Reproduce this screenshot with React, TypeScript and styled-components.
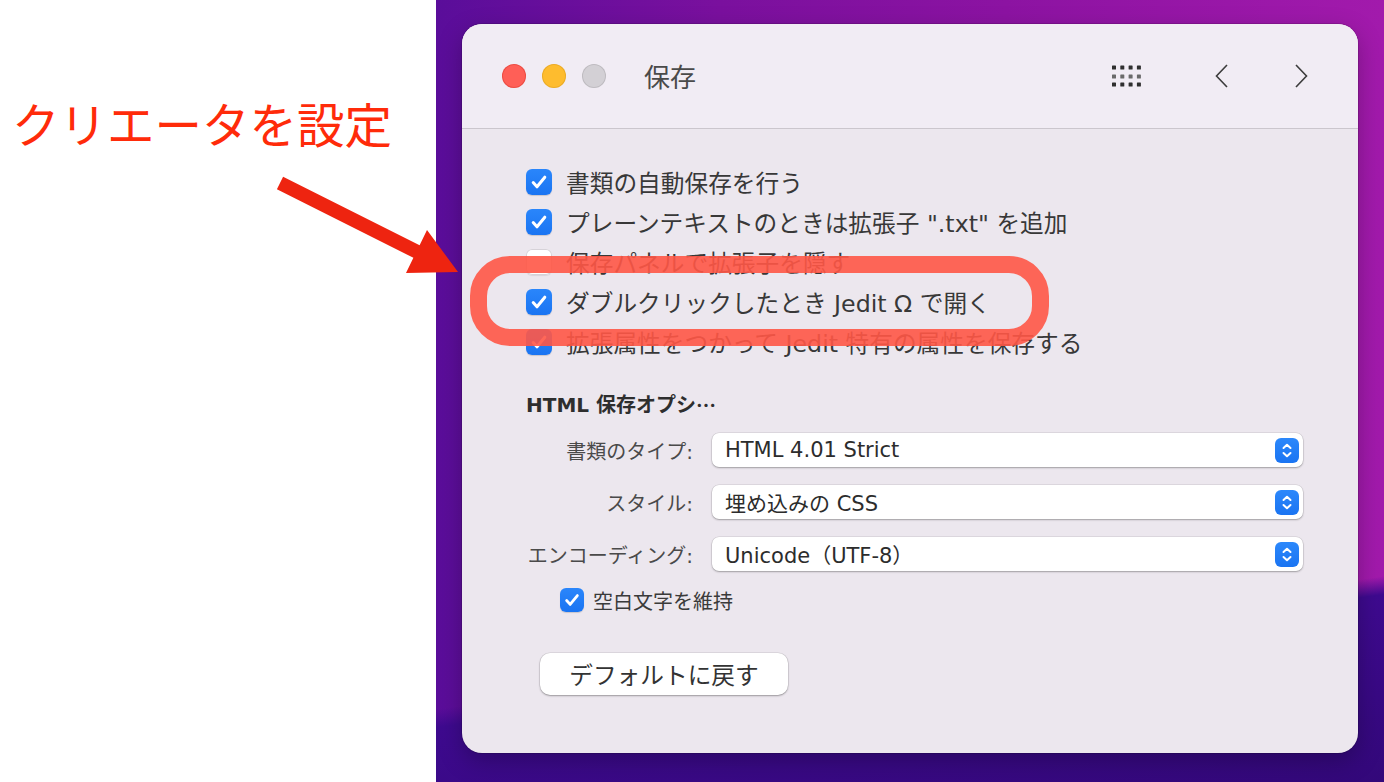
import React from "react";
import styled, { createGlobalStyle } from "styled-components";

const GlobalStyle = createGlobalStyle`
  html, body { margin: 0; padding: 0; background: #ffffff; }
  body { font-family: "DejaVu Sans", "Noto Sans CJK JP", sans-serif; }
  * { box-sizing: border-box; }
`;

const Page = styled.div`
  position: relative;
  width: 1384px;
  height: 782px;
  display: flex;
  overflow: hidden;
`;

const Annotation = styled.aside`
  width: 436px;
  flex: none;
  background: #ffffff;
  padding: 99px 0 0 12px;
`;

const Caption = styled.div`
  font-family: "Noto Sans CJK JP", sans-serif;
  font-size: 47.5px;
  line-height: 1;
  color: #ff2b0a;
  font-weight: 400;
  white-space: nowrap;
`;

const ArrowOverlay = styled.svg`
  position: absolute;
  left: 0;
  top: 0;
  pointer-events: none;
  z-index: 3;
`;

const Desktop = styled.main`
  flex: 1;
  display: flex;
  padding: 24px 26px 29px 26px;
  background:
    linear-gradient(172deg, rgba(50, 8, 120, 0) 0%, rgba(50, 8, 120, 0) 77.5%, #3e0a8f 79.5%, #33087a 100%),
    linear-gradient(90deg, #5a0d9a 0%, #7a109e 30%, #8c13a2 60%, #a21aac 100%);
`;

const Window = styled.section`
  flex: 1;
  display: flex;
  flex-direction: column;
  background: #ece7ee;
  border-radius: 20px;
  box-shadow: 0 0 0 1px rgba(0, 0, 0, 0.12), 0 8px 24px rgba(0, 0, 0, 0.25);
`;

const TitleBar = styled.header`
  flex: none;
  height: 105px;
  display: flex;
  align-items: center;
  padding: 0 49px 0 40px;
  background: #f1ecf4;
  border-bottom: 1px solid #cbc6cd;
  border-radius: 20px 20px 0 0;
`;

const Lights = styled.div`
  display: flex;
  gap: 16px;
`;

const Light = styled.span<{ $c: string; $b: string }>`
  width: 24px;
  height: 24px;
  border-radius: 50%;
  background: ${(p) => p.$c};
  box-shadow: inset 0 0 0 1px ${(p) => p.$b};
`;

const Title = styled.h1`
  margin: 0 0 0 38px;
  font-family: "Noto Sans CJK JP", sans-serif;
  font-size: 26px;
  font-weight: 400;
  color: #4a4a4a;
  line-height: 1;
`;

const Spacer = styled.div`
  flex: 1;
`;

const ToolIcon = styled.svg<{ $ml: number }>`
  margin-left: ${(p) => p.$ml}px;
  display: block;
`;

const Body = styled.div`
  flex: 1;
  display: flex;
  flex-direction: column;
  padding: 33px 55px 0 64px;
`;

const CheckList = styled.div`
  display: flex;
  flex-direction: column;
`;

const Row = styled.div`
  position: relative;
  height: 40px;
  display: flex;
  align-items: center;
  gap: 14px;
  font-size: 23.7px;
  color: #383838;
  white-space: nowrap;
`;

const Box = styled.span<{ $on: boolean; $size: number }>`
  flex: none;
  width: ${(p) => p.$size}px;
  height: ${(p) => p.$size}px;
  border-radius: 6px;
  display: flex;
  align-items: center;
  justify-content: center;
  background: ${(p) => (p.$on ? "linear-gradient(#2a86fb, #1a74f2)" : "#ffffff")};
  box-shadow: ${(p) =>
    p.$on
      ? "0 1px 1px rgba(0,0,0,0.15)"
      : "inset 0 0 0 1px #d6d2d8, 0 1px 1px rgba(0,0,0,0.08)"};
`;

const Highlight = styled.div`
  position: absolute;
  left: -56px;
  top: -26px;
  width: 579px;
  height: 90px;
  border: 17px solid rgba(255, 86, 70, 0.9);
  border-radius: 40px;
  z-index: 2;
  pointer-events: none;
`;

const SectionTitle = styled.h2`
  margin: 31px 0 0 0;
  height: 24px;
  display: flex;
  align-items: center;
  font-size: 20px;
  line-height: 24px;
  font-weight: 700;
  color: #2e2e2e;
  white-space: nowrap;
`;

const Ellipsis = styled.span`
  font-family: "Noto Sans CJK JP", sans-serif;
`;

const Form = styled.div`
  margin-top: 16px;
  display: grid;
  grid-template-columns: 167px 1fr;
  grid-auto-rows: 34px;
  column-gap: 19px;
  row-gap: 18px;
  align-items: center;
`;

const Label = styled.label`
  text-align: right;
  font-size: 20px;
  color: #4a4a4a;
  white-space: nowrap;
`;

const Popup = styled.div`
  height: 34px;
  display: flex;
  align-items: center;
  justify-content: space-between;
  padding: 0 4px 0 13px;
  background: #ffffff;
  border-radius: 7px;
  box-shadow: 0 0 0 0.5px rgba(0, 0, 0, 0.12), 0 1px 2px rgba(0, 0, 0, 0.28);
  font-size: 21px;
  color: #2c2c2c;
  white-space: nowrap;
`;

const Stepper = styled.span`
  width: 24px;
  height: 25px;
  border-radius: 6px;
  background: linear-gradient(#2c88fb, #1a74f2);
  display: flex;
  align-items: center;
  justify-content: center;
`;

const SubRow = styled.div`
  margin: 17px 0 0 34px;
  height: 24px;
  display: flex;
  align-items: center;
  gap: 9px;
  font-size: 20px;
  color: #3a3a3a;
`;

const ResetButton = styled.button`
  margin: 41px 0 0 14px;
  width: 248px;
  height: 42px;
  border: none;
  border-radius: 10px;
  background: #ffffff;
  box-shadow: 0 0 0 0.5px rgba(0, 0, 0, 0.12), 0 1px 2px rgba(0, 0, 0, 0.3);
  font-family: inherit;
  font-size: 23.7px;
  color: #333333;
  padding: 0;
`;

const Check = ({ size }: { size: number }) => (
  <svg width={size} height={size} viewBox="0 0 26 26">
    <path d="M7.2 13.6 L11 17.8 L18.8 8.2" fill="none" stroke="#fff" strokeWidth="3" strokeLinecap="round" strokeLinejoin="round" />
  </svg>
);

const CheckBox = ({ on, size = 26 }: { on: boolean; size?: number }) => (
  <Box $on={on} $size={size}>{on && <Check size={size} />}</Box>
);

const PopupButton = ({ value }: { value: string }) => (
  <Popup>
    <span>{value}</span>
    <Stepper>
      <svg width="24" height="25" viewBox="0 0 24 25">
        <path d="M8.5 10 L12 6.8 L15.5 10 M8.5 15 L12 18.2 L15.5 15" fill="none" stroke="#fff" strokeWidth="2" strokeLinecap="round" strokeLinejoin="round" />
      </svg>
    </Stepper>
  </Popup>
);

const rows = [
  { on: true, text: "書類の自動保存を行う" },
  { on: true, text: "プレーンテキストのときは拡張子 \".txt\" を追加" },
  { on: false, text: "保存パネルで拡張子を隠す" },
  { on: true, text: "ダブルクリックしたとき Jedit Ω で開く", mark: true },
  { on: true, text: "拡張属性をつかって Jedit 特有の属性を保存する" },
];

const GridDots = () => {
  const xs = [2, 10.3, 18.6, 26.9];
  const ys = [2.5, 11.5, 19.5];
  return (
    <ToolIcon $ml={0} width="30" height="22" viewBox="0 0 30 22">
      {ys.map((y, r) =>
        xs.map((x, c) => (
          <rect key={`${r}-${c}`} x={x - 2} y={y - 2} width="4" height="4" rx="0.6" fill={r === 1 ? "#6a6a6a" : "#2f2f2f"} />
        ))
      )}
    </ToolIcon>
  );
};

export default function App() {
  return (
    <>
      <GlobalStyle />
      <Page>
        <Annotation>
          <Caption>クリエータを設定</Caption>
        </Annotation>
        <Desktop>
          <Window>
            <TitleBar>
              <Lights>
                <Light $c="#ff5f57" $b="rgba(200,40,30,0.35)" />
                <Light $c="#febc2e" $b="rgba(200,140,20,0.35)" />
                <Light $c="#d3d0d5" $b="rgba(0,0,0,0.1)" />
              </Lights>
              <Title>保存</Title>
              <Spacer />
              <GridDots />
              <ToolIcon $ml={73} width="13" height="24" viewBox="0 0 13 24">
                <path d="M12 1 L1.5 12 L12 23" fill="none" stroke="#3c3c3c" strokeWidth="1.6" />
              </ToolIcon>
              <ToolIcon $ml={67} width="14" height="24" viewBox="0 0 14 24">
                <path d="M1 1 L11.5 12 L1 23" fill="none" stroke="#3c3c3c" strokeWidth="1.6" />
              </ToolIcon>
            </TitleBar>
            <Body>
              <CheckList>
                {rows.map((r, i) => (
                  <Row key={i}>
                    <CheckBox on={r.on} />
                    <span>{r.text}</span>
                    {r.mark && <Highlight />}
                  </Row>
                ))}
              </CheckList>
              <SectionTitle>
                HTML 保存オプシ<Ellipsis>…</Ellipsis>
              </SectionTitle>
              <Form>
                <Label>書類のタイプ:</Label>
                <PopupButton value="HTML 4.01 Strict" />
                <Label>スタイル:</Label>
                <PopupButton value="埋め込みの CSS" />
                <Label>エンコーディング:</Label>
                <PopupButton value="Unicode（UTF-8）" />
              </Form>
              <SubRow>
                <CheckBox on size={24} />
                <span>空白文字を維持</span>
              </SubRow>
              <div>
                <ResetButton>デフォルトに戻す</ResetButton>
              </div>
            </Body>
          </Window>
        </Desktop>
        <ArrowOverlay width="1384" height="782" viewBox="0 0 1384 782">
          <polygon
            points="283.1,176.7 419.6,245.2 427,230 458,272 406,273 413.4,257.8 276.9,189.3"
            fill="#ee2410"
          />
        </ArrowOverlay>
      </Page>
    </>
  );
}
